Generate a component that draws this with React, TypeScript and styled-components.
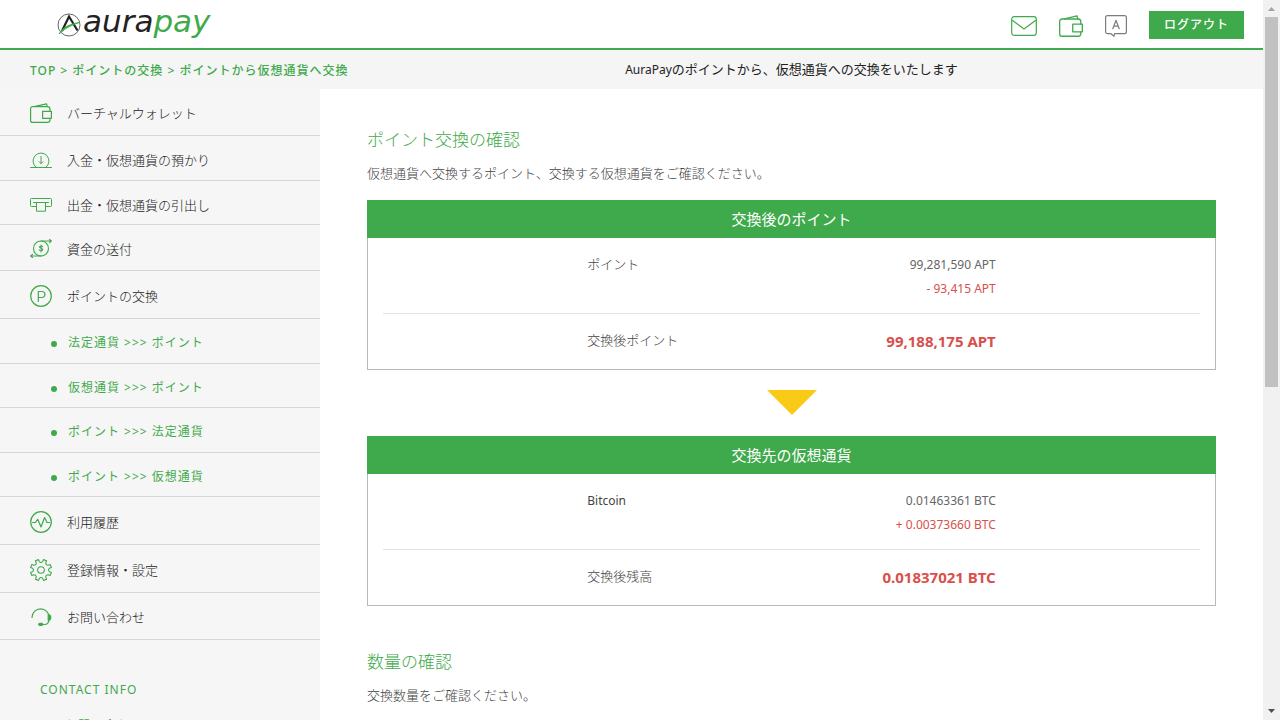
import React from "react";
import styled, { createGlobalStyle } from "styled-components";

const green = "#3faa4b";
const red = "#d8504c";

const GlobalStyle = createGlobalStyle`
  *, *::before, *::after { box-sizing: border-box; }
  html, body { margin: 0; height: 100%; overflow: hidden; }
  body {
    font-family: "Noto Sans", "Noto Sans CJK JP", sans-serif;
    font-size: 13px;
    font-weight: 400;
    line-height: 24px;
    color: #666;
    background: #fff;
  }
  h1, h2, h3, p, ul, dl, dd { margin: 0; padding: 0; font-size: inherit; font-weight: inherit; }
  ul { list-style: none; }
  a { color: inherit; text-decoration: none; }
`;

const Window = styled.div`
  display: grid;
  grid-template-columns: minmax(0, 1fr) 17px;
  height: 100vh;
  overflow: hidden;
`;

const Page = styled.div`
  overflow: hidden;
`;

const Header = styled.header`
  display: flex;
  align-items: center;
  justify-content: space-between;
  height: 50px;
  padding: 0 19px 0 57px;
  border-bottom: 2px solid ${green};
  background: #fff;
`;

const LogoLink = styled.a`
  display: flex;
`;

const Tools = styled.div`
  display: flex;
  align-items: center;
`;

const IconButton = styled.button`
  display: flex;
  margin: 4px 22px 0 0;
  padding: 0;
  border: 0;
  background: none;
`;

const Logout = styled.button`
  height: 28px;
  margin-top: 2px;
  padding: 0 15px;
  border: 0;
  background: ${green};
  color: #fff;
  font: 500 12px/24px "Noto Sans", "Noto Sans CJK JP", sans-serif;
  letter-spacing: 1px;
`;

const SubHeader = styled.div`
  display: grid;
  grid-template-columns: 320px minmax(0, 1fr);
  height: 39px;
  align-items: center;
  background: #f5f5f5;
`;

const Crumbs = styled.nav`
  padding: 2px 0 0 30px;
  color: ${green};
  font-size: 12px;
  font-weight: 500;
  letter-spacing: 1px;
  white-space: nowrap;
`;

const Lead = styled.p`
  color: #222;
  text-align: center;
`;

const Latin = styled.span`
  font-size: 12px;
  font-weight: 400;
`;

const Columns = styled.div`
  display: grid;
  grid-template-columns: 320px minmax(0, 1fr);
`;

const Sidebar = styled.aside`
  background: #f6f6f6;
`;

const NavItem = styled.li<{ $h: number }>`
  height: ${(p) => p.$h}px;
  padding-top: ${(p) => (p.$h > 45 ? 2 : 4)}px;
  border-bottom: 1px solid #d6d6d6;
`;

const NavLink = styled.a`
  display: flex;
  align-items: center;
  gap: 15px;
  height: 100%;
  padding-left: 30px;
  color: #222;
  font-weight: 300;
`;

const SubLink = styled(NavLink)`
  gap: 11px;
  padding-left: 51px;
  color: ${green};
  font-size: 12px;
  font-weight: 400;
  letter-spacing: 1px;
`;

const Dot = styled.span`
  width: 6px;
  height: 6px;
  margin-top: 2px;
  border-radius: 50%;
  background: ${green};
`;

const Contact = styled.section`
  padding: 38px 0 0 40px;
  color: ${green};
  font-size: 12px;
  letter-spacing: 1px;
`;

const ContactLink = styled.a`
  display: block;
  padding: 12px 0 0 25px;
`;

const Main = styled.main`
  padding: 39px 47px 0;
  background: #fff;
`;

const Title = styled.h2`
  color: ${green};
  font-size: 17px;
  font-weight: 300;
`;

const Note = styled.p`
  margin: 9px 0 15px;
  color: #444;
  font-weight: 300;
`;

const Card = styled.section``;

const CardHead = styled.h3`
  height: 38px;
  background: ${green};
  color: #fff;
  font-size: 15px;
  line-height: 38px;
  text-align: center;
`;

const CardBody = styled.dl`
  padding: 0 15px;
  border: 1px solid #b9b9b9;
  border-top: 0;
`;

const Row = styled.div`
  display: flex;
  justify-content: space-between;
  padding: 15px 25% 12px;
  & + & {
    padding: 15px 25% 16px;
    border-top: 1px solid #e3e3e3;
  }
`;

const Label = styled.dt`
  color: #444;
  font-weight: 300;
  line-height: 22px;
`;

const Value = styled.dd`
  font-size: 12px;
  text-align: right;
`;

const Change = styled.span`
  display: block;
  color: ${red};
`;

const Total = styled.dd`
  color: ${red};
  font-size: 15px;
  font-weight: 700;
`;

const Arrow = styled.svg`
  display: block;
  margin: 20px auto 21px;
`;

const Next = styled.section`
  padding-top: 44px;
`;

const Scrollbar = styled.div`
  display: flex;
  flex-direction: column;
  align-items: center;
  background: #f1f1f1;
`;

const Track = styled.div`
  flex: 1;
`;

const Thumb = styled.div`
  width: 13px;
  height: 54%;
  background: #c1c1c1;
`;

const Svg = ({ w, h, vw = w, vh = h, color = green, sw = 1.2, children }: {
  w: number; h: number; vw?: number; vh?: number; color?: string; sw?: number; children: React.ReactNode;
}) => (
  <svg width={w} height={h} viewBox={`0 0 ${vw} ${vh}`} fill="none" stroke={color} strokeWidth={sw}
    strokeLinejoin="round" strokeLinecap="round" aria-hidden="true">
    {children}
  </svg>
);

const Wallet = ({ w, h }: { w: number; h: number }) => (
  <Svg w={w} h={h} vw={22} vh={20}>
    <path d="M20 8.2V6.2a2.600 2.600 0 0 0-2.600-2.600H2.600a2 2 0 0 0-2 2v11.800a2 2 0 0 0 2 2h14.800a2.600 2.600 0 0 0 2.600-2.600v-1.400" />
    <path d="M12.600 8.300h8.800v7h-8.800zM5 3.400 16.600.8l.5 2.600" />
  </Svg>
);

const Mail = () => (
  <Svg w={26} h={20}>
    <rect x=".7" y=".7" width="24.600" height="18.600" rx="2.500" />
    <path d="m1.500 4.500 11.500 8.500L24.500 4.500" />
  </Svg>
);

const Language = () => (
  <Svg w={22} h={22} color="#7d7d7d">
    <path d="M2.500.6h17a1.900 1.900 0 0 1 1.900 1.900v14.300a1.900 1.900 0 0 1-1.900 1.900H9.500l-.5 2.600-3-2.600H2.500a1.900 1.900 0 0 1-1.900-1.900V2.500A1.900 1.900 0 0 1 2.500.6z" />
    <path d="m7.800 13.700 3.200-8.400 3.200 8.400M8.800 11.200h4.400" />
  </Svg>
);

const Deposit = () => (
  <Svg w={22} h={16} sw={1}>
    <path d="M.5 15.500h21M6 15.300a8 8 0 1 1 10 0M11 4.500v7M9.200 9.700 11 11.600l1.800-1.900" />
  </Svg>
);

const Withdraw = () => (
  <Svg w={22} h={14} sw={1}>
    <path d="M6 8.500H1.500a1 1 0 0 1-1-1v-6a1 1 0 0 1 1-1h19a1 1 0 0 1 1 1v6a1 1 0 0 1-1 1H16M3.500 4.500h15M6.500 4.500v8.700h9V4.500" />
  </Svg>
);

const Transfer = () => (
  <Svg w={22} h={19} sw={1.1}>
    <circle cx="11" cy="9.500" r="7.500" />
    <path d="M11 2h10.300M.7 17H11M19.500.5 21.400 2l-1.900 1.600M2.500 15.400.6 17l1.900 1.500" />
    <path d="M12.700 7.700c-.5-.8-3.200-1-3.200.4 0 1.500 3.300.9 3.300 2.500 0 1.500-2.900 1.400-3.500.3M11.100 6.100v6.800" />
  </Svg>
);

const Point = () => (
  <Svg w={22} h={22}>
    <circle cx="11" cy="11" r="10.300" />
    <path d="M8.300 16.500V6.500h3.600a3 3 0 0 1 0 6H8.300" />
  </Svg>
);

const History = () => (
  <Svg w={22} h={22}>
    <circle cx="11" cy="11" r="10.300" />
    <path d="M2.500 11.500h3l2.200-3.200L11 16l3.600-9.500 2.400 5h2.500" />
  </Svg>
);

const Gear = () => {
  const teeth = Array.from({ length: 8 }, (_, i) => {
    const at = (deg: number, r: number) => {
      const a = ((i * 45 + deg + 22.5) * Math.PI) / 180;
      return `${(11 + r * Math.cos(a)).toFixed(2)} ${(11 + r * Math.sin(a)).toFixed(2)}`;
    };
    return `${i ? "L" : "M"}${at(-11, 8.6)}L${at(-9, 10.7)}L${at(9, 10.7)}L${at(11, 8.6)}Q${at(22.5, 6.6)} ${at(34, 8.6)}`;
  }).join("");
  return (
    <Svg w={22} h={22} sw={1.1}>
      <path d={`${teeth}z`} />
      <circle cx="11" cy="11" r="3.300" />
    </Svg>
  );
};

const Headset = () => (
  <Svg w={22} h={18}>
    <path d="M2 9.500a8.600 8.600 0 0 1 17.200 0c0 4-1.200 7-4.200 7h-4" />
    <path d="M18.200 6.800c3.400 0 3.400 5.400 0 5.400z" fill={green} />
    <rect x="8.700" y="15.300" width="4" height="2" rx="1" fill={green} />
  </Svg>
);

const Logo = () => (
  <svg width="160" height="44" viewBox="0 -4 160 44" role="img" aria-label="aurapay">
    <circle cx="12" cy="19" r="11" fill="none" stroke="#555" strokeWidth=".9" />
    <path d="M5 25 12 10.500l8.500 14" fill="none" stroke="#222" strokeWidth="2.200" />
    <path d="M2 28C6 21 12 18.300 23 16.300 14 19.300 8 22.500 2 28z" fill={green} stroke={green} strokeWidth=".8" />
    <text x="26" y="26" fontFamily="DejaVu Sans, sans-serif" fontStyle="italic" fontSize="31" fill="#222">
      aura<tspan fill={green}>pay</tspan>
    </text>
  </svg>
);

type Entry = { label: string; h: number; icon?: React.ReactNode };

const entries: Entry[] = [
  { label: "バーチャルウォレット", h: 47, icon: <Wallet w={22} h={20} /> },
  { label: "入金・仮想通貨の預かり", h: 45, icon: <Deposit /> },
  { label: "出金・仮想通貨の引出し", h: 44, icon: <Withdraw /> },
  { label: "資金の送付", h: 46, icon: <Transfer /> },
  { label: "ポイントの交換", h: 48, icon: <Point /> },
  { label: "法定通貨 >>> ポイント", h: 45 },
  { label: "仮想通貨 >>> ポイント", h: 44 },
  { label: "ポイント >>> 法定通貨", h: 45 },
  { label: "ポイント >>> 仮想通貨", h: 44 },
  { label: "利用履歴", h: 48, icon: <History /> },
  { label: "登録情報・設定", h: 48, icon: <Gear /> },
  { label: "お問い合わせ", h: 47, icon: <Headset /> },
];

const Balance = ({ title, name, before, change, totalName, total }: {
  title: string; name: React.ReactNode; before: string; change: string; totalName: string; total: string;
}) => (
  <Card>
    <CardHead>{title}</CardHead>
    <CardBody>
      <Row>
        <Label>{name}</Label>
        <Value>{before}<Change>{change}</Change></Value>
      </Row>
      <Row>
        <Label>{totalName}</Label>
        <Total>{total}</Total>
      </Row>
    </CardBody>
  </Card>
);

export default function App() {
  return (
    <>
      <GlobalStyle />
      <Window>
        <Page>
          <Header>
            <LogoLink href="#"><Logo /></LogoLink>
            <Tools>
              <IconButton aria-label="メール"><Mail /></IconButton>
              <IconButton aria-label="ウォレット"><Wallet w={24} h={22} /></IconButton>
              <IconButton aria-label="言語"><Language /></IconButton>
              <Logout>ログアウト</Logout>
            </Tools>
          </Header>
          <SubHeader>
            <Crumbs>
              <a href="#">TOP</a> &gt; <a href="#">ポイントの交換</a> &gt; <a href="#">ポイントから仮想通貨へ交換</a>
            </Crumbs>
            <Lead><Latin>AuraPay</Latin>のポイントから、仮想通貨への交換をいたします</Lead>
          </SubHeader>
          <Columns>
            <Sidebar>
              <ul>
                {entries.map((e) => (
                  <NavItem key={e.label} $h={e.h}>
                    {e.icon
                      ? <NavLink href="#">{e.icon}{e.label}</NavLink>
                      : <SubLink href="#"><Dot />{e.label}</SubLink>}
                  </NavItem>
                ))}
              </ul>
              <Contact>
                <h2>CONTACT INFO</h2>
                <ContactLink href="#">お問い合わせ</ContactLink>
              </Contact>
            </Sidebar>
            <Main>
              <Title>ポイント交換の確認</Title>
              <Note>仮想通貨へ交換するポイント、交換する仮想通貨をご確認ください。</Note>
              <Balance title="交換後のポイント" name="ポイント" before="99,281,590 APT" change="- 93,415 APT"
                totalName="交換後ポイント" total="99,188,175 APT" />
              <Arrow width="50" height="25" viewBox="0 0 50 25" aria-hidden="true">
                <path d="M0 0h50L25 25z" fill="#f9ca16" />
              </Arrow>
              <Balance title="交換先の仮想通貨" name={<Latin>Bitcoin</Latin>} before="0.01463361 BTC" change="+ 0.00373660 BTC"
                totalName="交換後残高" total="0.01837021 BTC" />
              <Next>
                <Title>数量の確認</Title>
                <Note>交換数量をご確認ください。</Note>
              </Next>
            </Main>
          </Columns>
        </Page>
        <Scrollbar aria-hidden="true">
          <svg width="17" height="17" viewBox="0 0 17 17"><path d="M5 11h7L8.500 7z" fill="#a3a3a3" /></svg>
          <Track><Thumb /></Track>
          <svg width="17" height="17" viewBox="0 0 17 17"><path d="M5 6h7l-3.500 4z" fill="#505050" /></svg>
        </Scrollbar>
      </Window>
    </>
  );
}
